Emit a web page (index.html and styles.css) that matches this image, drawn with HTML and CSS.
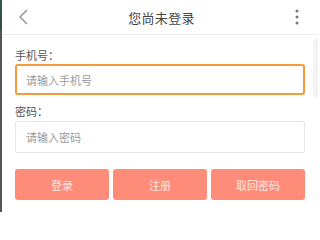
FILE: index.html
```html
<!DOCTYPE html>
<html lang="zh">
<head>
<meta charset="utf-8">
<link rel="stylesheet" href="styles.css">
</head>
<body>
<div class="edge"></div>
<div class="page">
  <header class="bar">
    <svg class="back" width="12" height="18" viewBox="0 0 12 18"><path d="M10 2 L3 9 L10 16" fill="none" stroke="#8a8a8a" stroke-width="1.3"/></svg>
    <div class="title">您尚未登录</div>
    <svg class="more" width="6" height="18" viewBox="0 0 6 18"><circle cx="3" cy="3" r="1.5" fill="#777"/><circle cx="3" cy="9" r="1.5" fill="#777"/><circle cx="3" cy="15" r="1.5" fill="#777"/></svg>
  </header>
  <main class="form">
    <label class="label">手机号：</label>
    <div class="input focus">请输入手机号</div>
    <label class="label l2">密码：</label>
    <div class="input i2">请输入密码</div>
    <div class="btns">
      <div class="btn">登录</div>
      <div class="btn">注册</div>
      <div class="btn">取回密码</div>
    </div>
  </main>
  <div class="scroll"></div>
</div>
</body>
</html>
```
FILE: styles.css
```css
html, body { margin: 0; padding: 0; }
body {
  width: 318px; height: 212px; overflow: hidden; background: #fff;
  font-family: "Noto Sans CJK SC", "Noto Sans", sans-serif;
  position: relative;
}
.edge {
  position: absolute; left: 0; top: 0; bottom: 0; width: 2px;
  background: linear-gradient(#2f5a48 0, #3a4a44 30px, #555 31px, #555 100%);
}
.page { height: 212px; }
.bar {
  height: 35px; box-sizing: border-box; border-bottom: 1px solid #ebebeb;
  display: flex; align-items: center; justify-content: space-between;
  padding: 0 18px 0 17px;
}
.title { font-size: 13px; color: #444; letter-spacing: 0.3px; }
.form { padding: 0 13px 0 15px; display: flex; flex-direction: column; }
.label { font-size: 11px; color: #555; margin-top: 13px; height: 15px; line-height: 15px; }
.l2 { margin-top: 9px; }
.input {
  margin-top: 2px; height: 31px; box-sizing: border-box;
  border: 1px solid #e6e6e6; border-radius: 2px;
  font-size: 11px; color: #9a9a9a; padding-left: 10px;
  display: flex; align-items: center;
}
.input.i2 { height: 32px; }
.input.focus { border: 2px solid #f59a3b; padding-left: 9px; border-radius: 3px; margin-top: 1px; }
.btns { display: flex; gap: 4px; margin-top: 16px; }
.btn {
  flex: 1; height: 31px; border-radius: 3px; background: #ff8b79;
  color: #fde8e4; font-size: 11px; display: flex; align-items: center; justify-content: center;
}
.scroll {
  position: absolute; right: -6px; top: 38px; width: 11px; height: 60px;
  background: #f3f3f3; border-radius: 6px;
}
```
